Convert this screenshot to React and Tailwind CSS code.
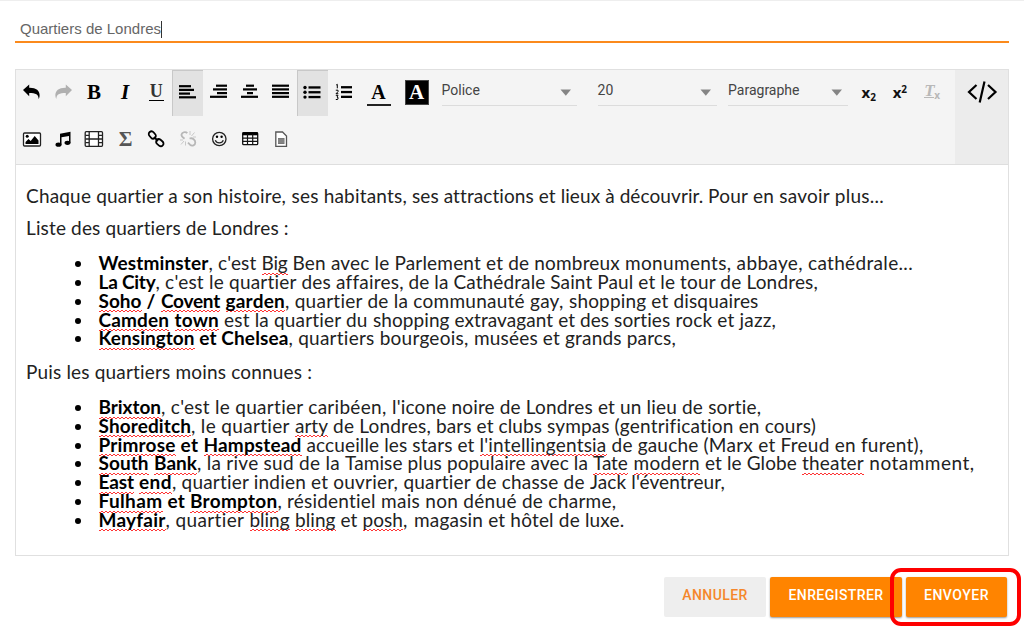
import { useLayoutEffect, useRef } from "react";

// A run of text stretched to a given width by adjusting its letter spacing.
function Run({ text, width, kind = "" }) {
  const ref = useRef(null);
  useLayoutEffect(() => {
    const el = ref.current;
    el.style.letterSpacing = "0px";
    const natural = el.firstChild.getBoundingClientRect().width;
    el.style.letterSpacing = (width - natural) / text.length + "px";
  }, [text, width]);
  const bold = kind.includes("b") ? "font-bold text-black" : "";
  const wavy = kind.includes("w")
    ? "bg-[linear-gradient(135deg,transparent_35%,#f33_35%,#f33_65%,transparent_65%),linear-gradient(45deg,transparent_35%,#f33_35%,#f33_65%,transparent_65%)] bg-[length:4px_2px,4px_2px] bg-[position:0_100%,2px_100%] bg-repeat-x pb-[0.6px]"
    : "";
  return (
    <span ref={ref} className={`inline-block whitespace-pre ${bold}`} style={{ width }}>
      <span className={wavy}>{text}</span>
    </span>
  );
}

// Each run is [text, right edge, kind]; widths follow from successive edges.
function Line({ start, runs }) {
  return runs.map(([text, end, kind], i) => (
    <Run key={i} text={text} kind={kind} width={end - (i ? runs[i - 1][1] : start)} />
  ));
}

const first = [
  [["Westminster", 208.5, "b"], [", c'est ", 261.5], ["Big", 287.5, "w"], [" Ben avec le Parlement et de nombreux ", 625], ["monuments, abbaye, cathédrale...", 913]],
  [["La City", 155.5, "b"], [", c'est le quartier des affaires, ", 408.5], ["de la Cathédrale Saint Paul et le ", 680], ["tour de Londres,", 818]],
  [["Soho", 141.5, "bw"], [" / ", 161, "b"], ["Covent", 220, "bw"], [" ", 225.5, "b"], ["garden", 285, "bw"], [", quartier de la communauté gay, ", 569], ["shopping et disquaires", 758.5]],
  [["Camden", 169, "bw"], [" ", 174.5, "b"], ["town", 219, "bw"], [" est la quartier du ", 373], ["shopping extravagant et des sorties ", 675.5], ["rock et jazz,", 776]],
  [["Kensington", 194.5, "bw"], [" et Chelsea", 288.5, "b"], [", quartiers bourgeois, ", 474], ["musées et grands parcs,", 676]],
];

const second = [
  [["Brixton", 161, "bw"], [", c'est le quartier caribéen, ", 392], ["l'icone noire de Londres et un lieu ", 682], ["de sortie,", 761.5]],
  [["Shoreditch", 191, "bw"], [", le quartier ", 295], ["arty", 328, "w"], [" de Londres, ", 436], ["bars et clubs sympas ", 614.5], ["(gentrification en cours)", 816]],
  [["Primrose", 175.5, "bw"], [" et ", 203.5, "b"], ["Hampstead", 301.5, "bw"], [" accueille les stars et ", 479.5], ["l'intellingentsia", 606.5, "w"], [" de gauche ", 703.5], ["(Marx et Freud en furent),", 923.5]],
  [["South", 148.5, "bw"], [" ", 154, "b"], ["Bank", 197, "bw"], [", la rive sud de la ", 345], ["Tamise plus populaire avec la ", 593], ["Tate", 627.5, "w"], [" ", 633.5], ["modern", 700, "w"], [" et le Globe ", 802], ["theater", 864, "w"], [" notamment,", 974.5]],
  [["East", 134, "bw"], [" ", 139, "b"], ["end", 172, "bw"], [", quartier indien et ouvrier, ", 403.5], ["quartier de chasse de ", 590], ["Jack l'éventreur,", 725]],
  [["Fulham", 162.5, "bw"], [" et ", 190, "b"], ["Brompton", 277.5, "bw"], [", résidentiel ", 381], ["mais non dénué de charme,", 616.5]],
  [["Mayfair", 165.5, "bw"], [", quartier ", 249.5], ["bling", 289.5, "w"], [" ", 295], ["bling", 335.5, "w"], [" et ", 362.5], ["posh", 403, "w"], [", ", 414], ["magasin et hôtel de luxe.", 624.5]],
];

function Para({ runs }) {
  return (
    <p className="h-[31.5px] whitespace-nowrap pl-[10px] leading-[31.5px]">
      <Line start={26} runs={runs} />
    </p>
  );
}

function List({ items }) {
  return (
    <ul className="mt-[10.8px] -mb-[0.5px]">
      {items.map((runs, i) => (
        <li key={i} className="flex h-[18.8px] whitespace-nowrap pl-[59px] leading-[18.8px]">
          <span className="mt-[7px] mr-[17.5px] size-[6px] shrink-0 rounded-full bg-black" />
          <span>
            <Line start={98.5} runs={runs} />
          </span>
        </li>
      ))}
    </ul>
  );
}

function Tool({ active, children }) {
  return (
    <span
      className={`flex h-[46px] w-[31.2px] shrink-0 items-center justify-center ${
        active ? "border-t border-l border-[#c8c8c8] bg-[#e2e2e2] pr-[2px]" : ""
      }`}
    >
      {children}
    </span>
  );
}

function Svg({ children, className = "" }) {
  return (
    <svg width="20" height="20" viewBox="0 0 20 20" className={`ml-[0.5px] ${className}`}>
      {children}
    </svg>
  );
}

function Bars({ rows, top = 1.6 }) {
  return (
    <Svg>
      {rows.map(([x, w], i) => (
        <rect key={i} x={x} y={top + i * 3.7} width={w} height="2.2" />
      ))}
    </Svg>
  );
}

const arrow = "M1 7 7.200 1.400v3.400c6.500-.2 10.800 2.600 10.400 8.200-.1 1.300-.5 2.200-1 3 .2-4.700-3-6.100-9.400-6.100v3.300z";

function Select({ label, className }) {
  return (
    <div className={`flex h-[32px] justify-between border-b border-[#dcdcdc] ${className}`}>
      <span className="font-[Roboto] text-[14px] leading-[32px] text-[#444]">{label}</span>
      <svg width="12" height="7" viewBox="0 0 12 7" className="mt-[15px] mr-[5px] fill-[#858585]">
        <path d="M.5.500h10.500L5.800 6.800z" />
      </svg>
    </div>
  );
}

function Toolbar() {
  return (
    <div className="flex h-[95px] border-b border-[#dedede] bg-[#f4f4f4]">
      <div className="w-[939px]">
        <div className="flex h-[46px]">
          <Tool><Svg><path d={arrow} /></Svg></Tool>
          <Tool><Svg className="fill-[#b0b0b0]"><path d={arrow} transform="translate(20 0) scale(-1 1)" /></Svg></Tool>
          <Tool><span className="mb-[2px] font-['Liberation_Serif'] text-[21px] leading-[20px] font-bold">B</span></Tool>
          <Tool><span className="mb-[2px] font-['Liberation_Serif'] text-[21px] leading-[20px] font-bold italic">I</span></Tool>
          <Tool>
            <span className="h-[16px] w-[15px] border-b border-black text-center font-['Liberation_Serif'] text-[18px] leading-[12px] font-bold text-[#333]">U</span>
          </Tool>
          <Tool active><Bars top={1.1} rows={[[2, 12], [2, 15], [2, 11], [2, 17]]} /></Tool>
          <Tool><Bars rows={[[7, 11], [4, 14], [8, 10], [1, 17]]} /></Tool>
          <Tool><Bars rows={[[6, 8], [3, 14], [7, 6], [1, 17]]} /></Tool>
          <Tool><Bars rows={[[1, 17], [1, 17], [1, 17], [1, 17]]} /></Tool>
          <Tool active>
            <Svg>
              {[2.3, 7.1, 11.9].map((y) => (
                <g key={y}>
                  <circle cx="3" cy={y + 1.2} r="1.700" />
                  <rect x="6.500" y={y} width="12" height="2.300" />
                </g>
              ))}
            </Svg>
          </Tool>
          <Tool>
            <Svg>
              {[3.1, 7.9, 12.7].map((y) => (
                <rect key={y} x="7" y={y} width="11" height="2.300" />
              ))}
              <path transform="translate(0 -1)" d="M2.200 3 3.300 2.300v4M1.800 8.200h2.200v1.500l-2 2h2.300M1.800 13.300h2.200l-1 1.800 1.200.6-.6 1.800H1.800" fill="none" stroke="#000" strokeWidth="1" />
            </Svg>
          </Tool>
          <span className="mt-[10px] ml-[7.500px] h-[26px] w-[24px] border-b-[2.500px] border-[#222] text-center font-['Liberation_Serif'] text-[20px] leading-[25px] font-bold">A</span>
          <span className="mt-[10px] ml-[14px] h-[25px] w-[24px] border border-[#444] bg-black text-center font-['Liberation_Serif'] text-[21px] leading-[23px] font-bold text-white">A</span>
          <Select label="Police" className="mt-[4px] ml-[13px] w-[135px]" />
          <Select label="20" className="mt-[4px] ml-[21px] w-[119px]" />
          <Select label="Paragraphe" className="mt-[4px] ml-[11.500px] w-[120px]" />
          <div className="ml-[5px] flex font-['Open_Sans'] text-[15px] font-bold text-[#111]">
            <Tool>
              <span className="leading-[20px]">x<span className="relative top-[3px] text-[10px]">2</span></span>
            </Tool>
            <Tool>
              <span className="leading-[20px]">x<span className="relative top-[-5px] text-[10px]">2</span></span>
            </Tool>
            <Tool>
              <span className="mb-[1px] ml-[2px] flex text-[#b8b8b8]">
                <span className="h-[14px] w-[10px] border-b border-[#b8b8b8] text-center font-['Liberation_Serif'] text-[17px] leading-[13px] italic">T</span>
                <span className="mt-[5px] text-[10px] leading-[12px]">x</span>
              </span>
            </Tool>
          </div>
        </div>
        <div className="flex h-[48px]">
          <Tool>
            <Svg>
              <rect x="1.500" y="4" width="17" height="13" rx="1" fill="#fff" stroke="#222" strokeWidth="1.300" />
              <circle cx="5.200" cy="7.300" r="1.500" />
              <path d="M3.500 15v-2l3-3 2.200 2 4-5 3.800 4.500V15z" />
            </Svg>
          </Tool>
          <Tool>
            <Svg>
              <path d="M7 4.800 17.500 2.800v11h-1.500V7L8.500 8.300v7.500H7z" />
              <ellipse cx="5.500" cy="15.700" rx="3" ry="2.100" />
              <ellipse cx="14.500" cy="13.800" rx="3" ry="2.100" />
            </Svg>
          </Tool>
          <Tool>
            <Svg>
              <g fill="#fff" stroke="#222" strokeWidth="1.300">
                <rect x="1.200" y="2.700" width="17.300" height="14.600" rx="1" />
                <path d="M5.200 3v14.500M14.500 3v14.500M5.200 10h9.300M1.500 6.400h3.500M1.500 10h3.500M1.500 13.700h3.500M14.500 6.400h4M14.500 10h4M14.500 13.700h4" />
              </g>
            </Svg>
          </Tool>
          <Tool><span className="ml-[1px] font-['Liberation_Serif'] text-[21px] leading-[20px] font-bold text-[#555]">Σ</span></Tool>
          <Tool>
            <Svg>
              <g fill="none" stroke="#000" strokeWidth="1.800">
                <rect x="-4" y="-2.700" width="8" height="5.400" rx="2.700" transform="translate(5.300 6) rotate(50)" />
                <rect x="-4" y="-2.700" width="8" height="5.400" rx="2.700" transform="translate(12.800 13.700) rotate(40)" />
                <path d="m7 8 4 4" />
              </g>
            </Svg>
          </Tool>
          <Tool>
            <Svg>
              <g fill="none" stroke="#b7b7b7" strokeWidth="1.800">
                <path d="M9.300 4.200c-2-2.200-5.200-.8-5.800 1.300-.5 1.700 1.500 3 3 4.200M11.500 9.500c3.300-1 5.800 1.500 5.800 4 0 2.800-3.200 4-5.300 2.200l-2-2" />
              </g>
              <path d="M12 6V2M13.500 7l3-3.500M15 8h3M7.500 12.500v4M6 12l-3 3.500M5 11H2" stroke="#c8c8c8" fill="none" />
            </Svg>
          </Tool>
          <Tool>
            <Svg>
              <circle cx="10.300" cy="10" r="6.700" fill="none" stroke="#222" strokeWidth="1.300" />
              <circle cx="8" cy="7.800" r="1.200" />
              <circle cx="12.600" cy="7.800" r="1.200" />
              <path d="M6.300 11.300c1.300 3.500 6.700 3.500 8 0" fill="none" stroke="#222" strokeWidth="1.300" />
            </Svg>
          </Tool>
          <Tool>
            <Svg>
              <rect x="2.700" y="3.700" width="15" height="12" rx="1" fill="#fff" stroke="#111" strokeWidth="1.300" />
              <rect x="2.500" y="3.300" width="15.300" height="3" />
              <path d="M2.700 9.200h15M2.700 12.400h15M7.500 5v11M12.700 5v11" stroke="#111" strokeWidth="1.200" />
            </Svg>
          </Tool>
          <Tool>
            <Svg>
              <path d="M4.800 3h6.700l4 4v10.300H4.800z" fill="#fff" stroke="#555" strokeWidth="1.300" />
              <rect x="7" y="9" width="6.500" height="6" className="fill-[#777]" />
              <path d="M7 11h6.500M7 13h6.500" stroke="#aaa" strokeWidth=".5" />
            </Svg>
          </Tool>
        </div>
      </div>
      <div className="flex flex-1 justify-center bg-[#ececec]">
        <svg width="32" height="24" viewBox="0 0 32 24" className="mt-[10px] ml-[1px] fill-none stroke-black stroke-[2.2]">
          <path d="M10.500 5 3 12l7.500 7M22 5l7.500 7L22 19M18.500 1.500l-4.800 21" />
        </svg>
      </div>
    </div>
  );
}

export default function App() {
  return (
    <div className="h-[643px] w-[1024px] overflow-hidden border-t border-[#eee] bg-white">
      <div className="mt-[15px] ml-[15px] flex h-[27px] w-[994px] items-center border-b-2 border-[#fb8a1c] pt-[1px] pl-[5px] font-['Liberation_Sans'] text-[15px] text-[#666]">
        <Run text="Quartiers de Londres" width={141} />
        <span className="h-[17px] w-px bg-[#333]" />
      </div>

      <div className="mt-[26px] ml-[15px] h-[487px] w-[994px] border border-[#e0e0e0]">
        <Toolbar />
        <div className="pt-[15.400px] font-[Lato] text-[19px] text-[#222]">
          <Para runs={[["Chaque quartier a son histoire, ", 291.5], ["ses habitants, ", 412], ["ses attractions et lieux à découvrir. ", 708], ["Pour en savoir plus...", 884]]} />
          <Para runs={[["Liste des quartiers de Londres :", 289]]} />
          <List items={first} />
          <div className="h-[8px]" />
          <Para runs={[["Puis les quartiers moins connues :", 312.5]]} />
          <List items={second} />
        </div>
      </div>

      <div className="mt-[12px] flex justify-end font-[Roboto] text-[14px] font-medium">
        <div className="mt-[9px] flex h-[40px] w-[102px] items-center justify-center rounded-[2px] bg-[#eee] pb-[3px] text-[#f5872b]">
          <Run text="ANNULER" width={65.5} />
        </div>
        <div className="mt-[9px] ml-[4px] flex h-[40px] w-[132px] items-center justify-center rounded-[2px] bg-[#ff8400] pb-[3px] text-white shadow-[0_1px_2px_#0006]">
          <Run text="ENREGISTRER" width={95} />
        </div>
        <div className="relative z-10 mr-[3px] -ml-[12px] h-[58px] w-[131px] rounded-[11px] border-4 border-[#fe0000] pt-[5px] pl-[12px]">
          <div className="flex h-[40px] w-[101px] items-center justify-center rounded-[2px] bg-[#ff8400] pb-[3px] text-white shadow-[0_1px_2px_#0006]">
            <Run text="ENVOYER" width={65} />
          </div>
        </div>
      </div>
    </div>
  );
}
